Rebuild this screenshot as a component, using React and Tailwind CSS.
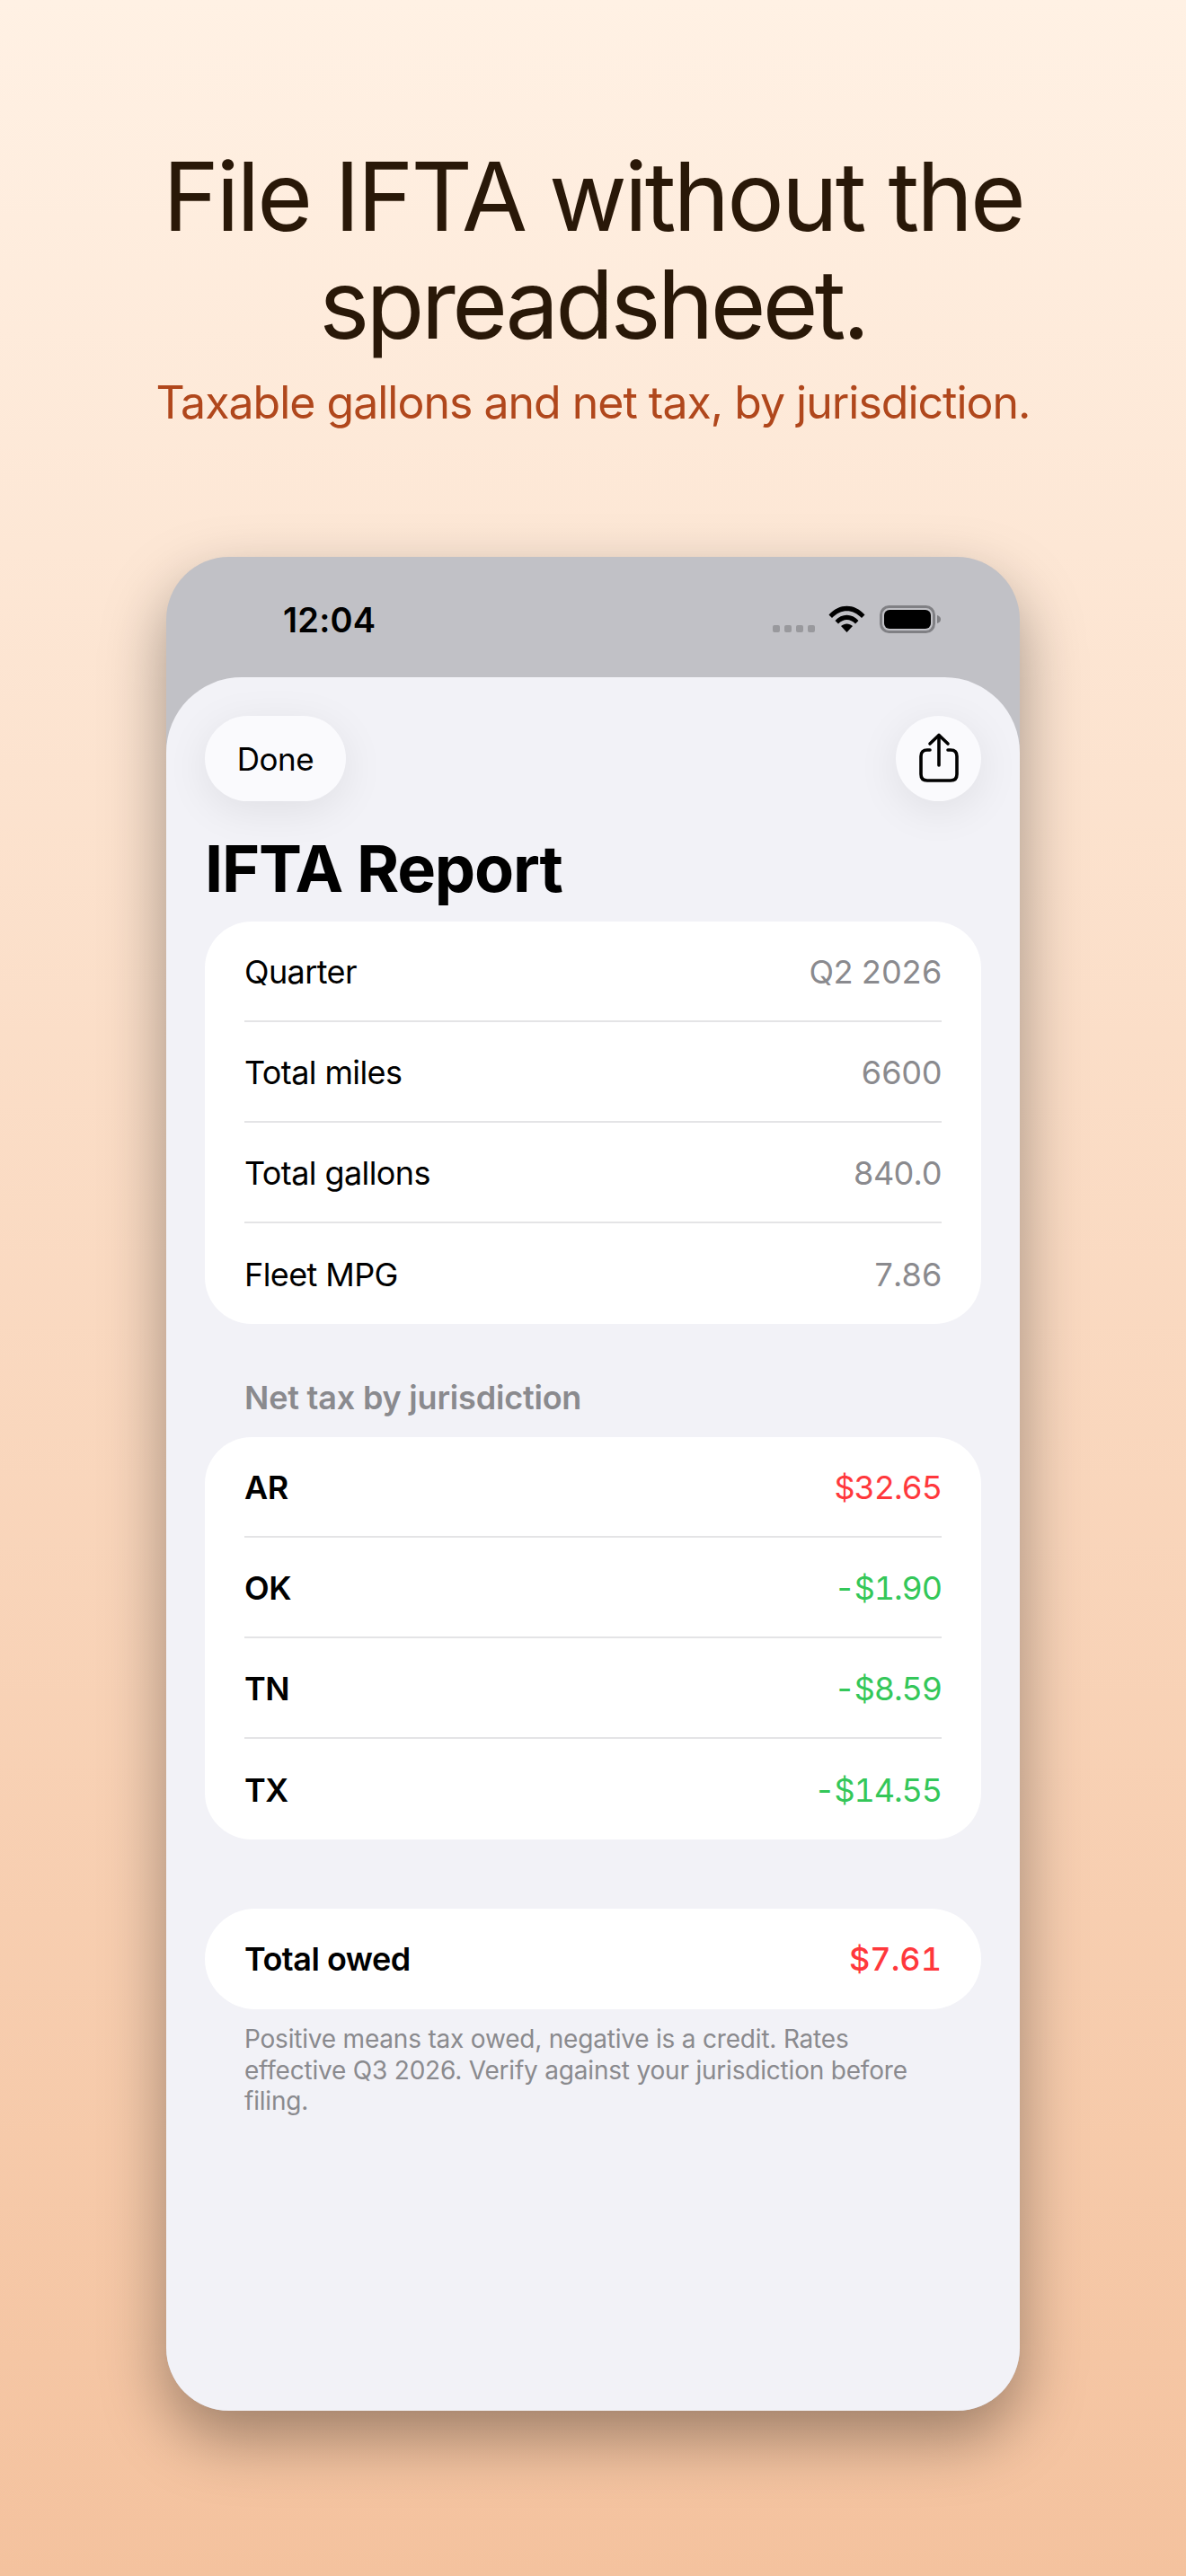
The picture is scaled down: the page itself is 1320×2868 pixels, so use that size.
const summary = [
  ["Quarter", "Q2 2026"],
  ["Total miles", "6600"],
  ["Total gallons", "840.0"],
  ["Fleet MPG", "7.86"],
];

const netTax = [
  ["AR", "$32.65", true],
  ["OK", "-$1.90", false],
  ["TN", "-$8.59", false],
  ["TX", "-$14.55", false],
];

function Row({ children, last }) {
  return (
    <div className="h-[112px] pl-[44px] flex">
      <div
        className={
          "flex-1 mr-[44px] pt-[2px] flex items-center justify-between " +
          (last ? "" : "border-b-2 border-[#e4e4e6]")
        }
      >
        {children}
      </div>
    </div>
  );
}

function StatusIcons() {
  return (
    <div className="flex items-start mt-[7px]">
      <div className="flex gap-[5px] mt-[22px] mr-[15px]">
        {[0, 1, 2, 3].map((i) => (
          <div key={i} className="w-[8px] h-[8px] rounded-[2px] bg-[#99999d]" />
        ))}
      </div>
      <svg width="41" height="30" viewBox="0 0 41 30" className="mr-[16px]">
        <path d="M0.5 10.5 C12 -2.5 29 -2.5 40.5 10.5 L37 14 C27 3.5 14 3.5 4 14 Z" fill="#000" />
        <path d="M7.5 17 C15 8.5 26 8.5 33.5 17 L30 20.5 C24.5 14.5 16.5 14.5 11 20.5 Z" fill="#000" />
        <path d="M14 23 C18 19.5 23 19.5 27 23 L20.5 30 Z" fill="#000" />
      </svg>
      <svg width="69" height="31" viewBox="0 0 69 31">
        <rect x="1.5" y="1.5" width="59" height="28" rx="9" fill="none" stroke="#808084" strokeWidth="3" />
        <rect x="5" y="5" width="52" height="21" rx="6" fill="#000" />
        <path d="M64 11 C67 12 68 13.5 68 15.5 C68 17.5 67 19 64 20 Z" fill="#808084" />
      </svg>
    </div>
  );
}

function ShareIcon() {
  return (
    <svg width="46" height="56" viewBox="0 0 46 56" fill="none" stroke="#000" strokeWidth="3.6" strokeLinecap="round" strokeLinejoin="round">
      <path d="M13 19 H10 C5.5 19 3 21.5 3 26 V46 C3 50.5 5.5 53 10 53 H36 C40.5 53 43 50.5 43 46 V26 C43 21.5 40.5 19 36 19 H33" />
      <path d="M23 36 V3" />
      <path d="M13 12 L23 2.5 L33 12" />
    </svg>
  );
}

export default function App() {
  return (
    <div className="h-[2868px] overflow-hidden flex flex-col items-center bg-gradient-to-b from-[#fff1e4] to-[#f4c29e] font-['Inter',sans-serif]">
      <h1 className="mt-[159px] w-[1100px] text-center text-[106px] leading-[120px] font-normal tracking-[-2.9px] text-[#291808]">
        File IFTA without the
        <br />
        <span className="tracking-[-3.7px]">spreadsheet.</span>
      </h1>
      <p className="mt-[17px] text-[50px] leading-[64px] tracking-[-1px] text-[#b0471c]">
        Taxable gallons and net tax, by jurisdiction.
      </p>

      <div className="mt-[140px] w-[950px] h-[2064px] rounded-[70px] bg-[#c1c1c6] shadow-[0_30px_70px_rgba(0,0,0,0.36)] flex flex-col overflow-hidden">
        <div className="h-[134px] shrink-0 flex justify-between pt-[47px] pl-[130px] pr-[87px]">
          <div className="text-[38px] leading-[46px] font-semibold tracking-[0.2px] text-black">12:04</div>
          <StatusIcons />
        </div>

        <div className="flex-1 bg-[#f2f2f7] rounded-t-[84px] px-[43px] pt-[43px]">
          <div className="flex justify-between">
            <div className="w-[157px] h-[95px] pt-[2px] rounded-[48px] bg-[#fafafd] shadow-[0_10px_48px_rgba(0,0,0,0.08)] flex items-center justify-center text-[35px] tracking-[-0.4px] text-black">
              Done
            </div>
            <div className="w-[95px] h-[95px] rounded-full bg-[#fafafd] shadow-[0_10px_48px_rgba(0,0,0,0.08)] flex items-center justify-center pb-[2px]">
              <ShareIcon />
            </div>
          </div>

          <h2 className="mt-[27px] text-[72px] leading-[96px] font-bold tracking-[-1.2px] text-black">IFTA Report</h2>

          <div className="mt-[11px] rounded-[52px] bg-white">
            {summary.map(([label, value], i) => (
              <Row key={label} last={i === summary.length - 1}>
                <span className="text-[36px] tracking-[-0.6px] text-black">{label}</span>
                <span className="text-[36px] tracking-[-0.9px] tabular-nums text-[#8a8a8e]">{value}</span>
              </Row>
            ))}
          </div>

          <div className="mt-[60px] pl-[44px] text-[36px] leading-[44px] font-semibold tracking-[-0.2px] text-[#8a8a8e]">
            Net tax by jurisdiction
          </div>

          <div className="mt-[22px] rounded-[52px] bg-white">
            {netTax.map(([label, value, owed], i) => (
              <Row key={label} last={i === netTax.length - 1}>
                <span className="text-[36px] font-semibold tracking-[-0.4px] text-black">{label}</span>
                <span className={"text-[36px] tracking-[-1.1px] tabular-nums " + (owed ? "text-[#ff383c]" : "text-[#34c759]")}>{value}</span>
              </Row>
            ))}
          </div>

          <div className="mt-[77px] h-[112px] rounded-[56px] bg-white px-[44px] flex items-center justify-between">
            <span className="text-[36px] font-semibold tracking-[-0.5px] text-black">Total owed</span>
            <span className="text-[36px] font-medium tabular-nums text-[#ff383c]">$7.61</span>
          </div>

          <p className="mt-[16px] px-[44px] text-[28px] leading-[34.5px] tracking-[-0.2px] text-[#8a8a8e]">
            Positive means tax owed, negative is a credit. Rates effective Q3 2026. Verify against your jurisdiction before filing.
          </p>
        </div>
      </div>
    </div>
  );
}
